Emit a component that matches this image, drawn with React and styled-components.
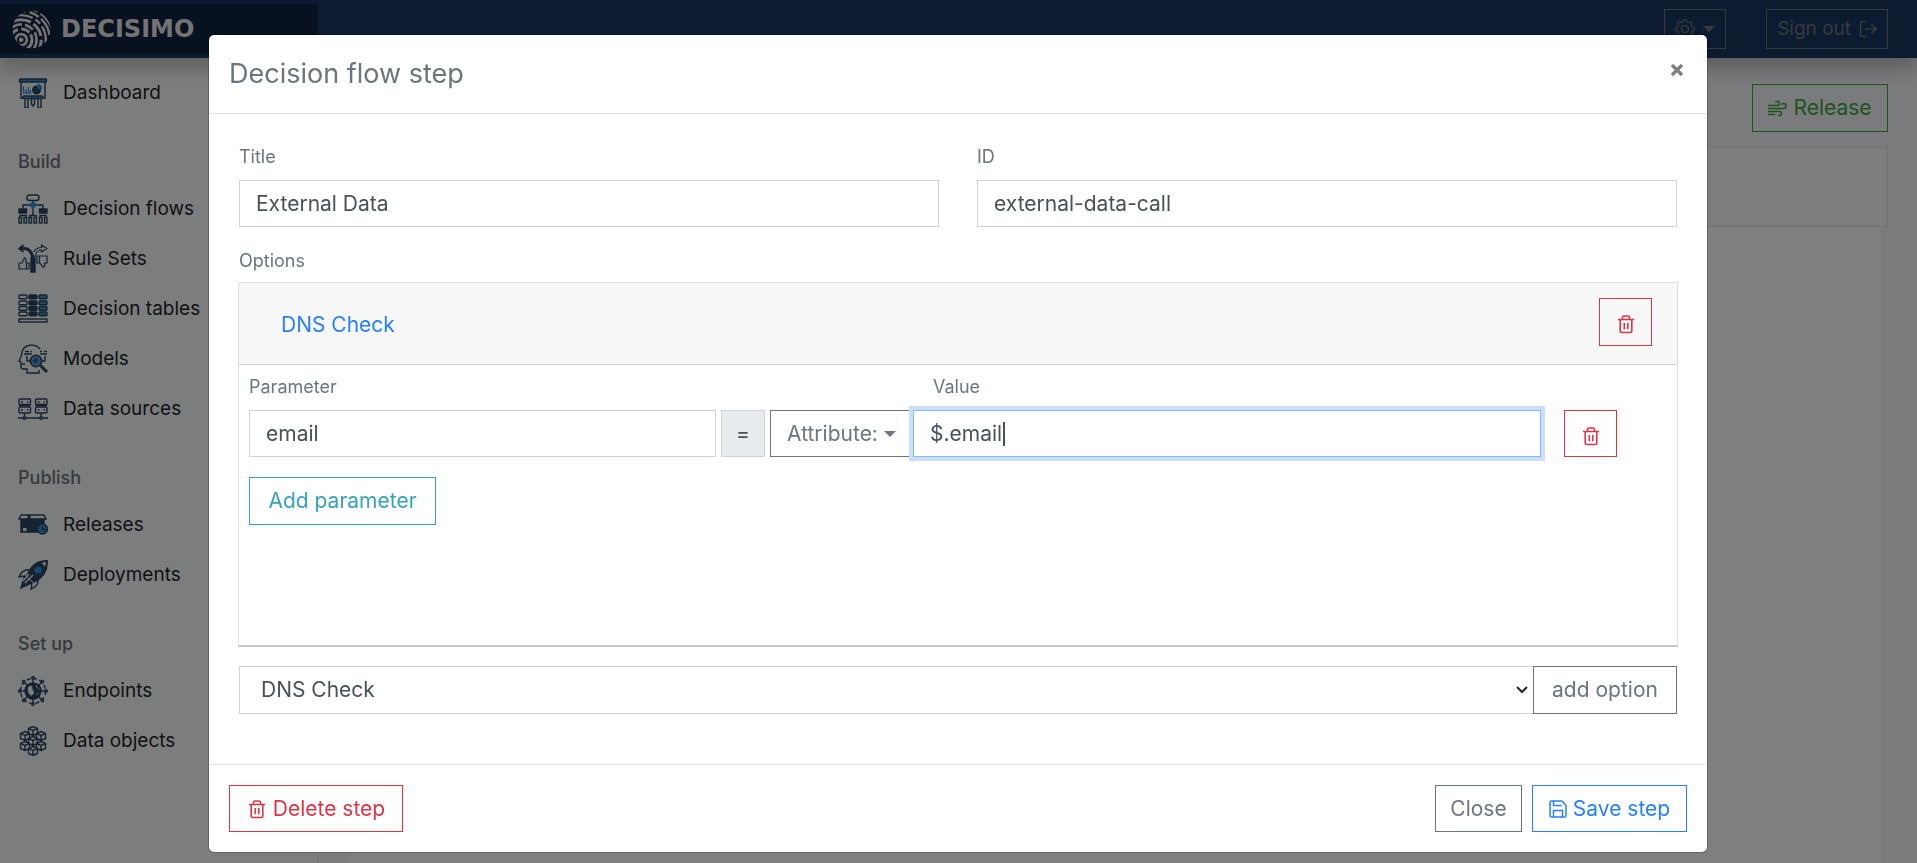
import React, { useState } from "react";
import styled, { createGlobalStyle } from "styled-components";
import { BsGear } from "react-icons/bs";

const GlobalStyle = createGlobalStyle`
  *, *::before, *::after {
    box-sizing: border-box;
  }
  html, body {
    margin: 0;
    height: 100%;
    overflow: hidden;
  }
  body, button, input, select {
    font-family: Inter, "Noto Sans", sans-serif;
    font-size: 21px;
    line-height: 30px;
  }
  body {
    color: #212529;
    background: #f5f6fa;
  }
`;

const NAVY = "#2a4560";
const BLUE = "#3593dd";

const Page = styled.div`
  min-height: 100vh;
  display: flex;
  flex-direction: column;
`;

const Navbar = styled.header`
  position: relative;
  z-index: 1;
  height: 58px;
  display: flex;
  align-items: center;
  justify-content: space-between;
  padding-right: 29px;
  background: #18365e;
  box-shadow: 0 10px 20px rgba(0, 0, 0, 0.25);
`;

const Brand = styled.a`
  width: 318px;
  height: 50px;
  display: flex;
  align-items: center;
  gap: 10px;
  padding-left: 12px;
  background: #0e2240;
  color: #e6e6e8;
  font-family: "DejaVu Sans", sans-serif;
  font-size: 24px;
  font-weight: 700;
  text-decoration: none;
`;

const NavActions = styled.div`
  display: flex;
  gap: 40px;
`;

const NavButton = styled.button`
  height: 40px;
  display: flex;
  align-items: center;
  gap: 8px;
  padding: 0 10px;
  border: 1px solid #6c757d;
  background: transparent;
  color: #6c757d;
  font-size: 19px;
`;

const Columns = styled.div`
  flex: 1;
  display: flex;
`;

const Sidebar = styled.nav`
  width: 318px;
  padding-top: 10px;
  background: #f8fbfa;
  border-right: 1px solid #dee2e6;
`;

const SectionTitle = styled.h2`
  margin: 0;
  padding: 32px 18px 10px;
  color: #6c757d;
  font-size: 18px;
  font-weight: 500;
  line-height: 24px;
`;

const NavLink = styled.a`
  height: 50px;
  display: flex;
  align-items: center;
  gap: 15px;
  padding-left: 18px;
  color: #212529;
  font-size: 19px;
  text-decoration: none;
`;

const Content = styled.main`
  flex: 1;
  display: flex;
  flex-direction: column;
  padding: 26px 29px 0 30px;
`;

const Toolbar = styled.div`
  display: flex;
  justify-content: flex-end;
  margin-bottom: 15px;
`;

const Panel = styled.div`
  height: 80px;
  border: 1px solid #dee2e6;
  background: #f8fbfa;
`;

const Canvas = styled.div`
  flex: 1;
  margin-right: 7px;
  background: #fefefe;
`;

const Backdrop = styled.div`
  position: fixed;
  inset: 0;
  z-index: 2;
  padding: 34px 21px 0 20px;
  background: rgba(0, 0, 0, 0.5);
`;

const Dialog = styled.section`
  max-width: 1500px;
  margin: 0 auto;
  border: 1px solid rgba(0, 0, 0, 0.2);
  border-radius: 6px;
  background: #fff;
  background-clip: padding-box;
`;

const DialogHeader = styled.header`
  display: flex;
  justify-content: space-between;
  align-items: flex-start;
  padding: 20px;
  border-bottom: 1px solid #dee2e6;
`;

const DialogTitle = styled.h1`
  margin: 0;
  color: #6c757d;
  font-size: 27px;
  font-weight: 400;
  line-height: 38px;
`;

const CloseIcon = styled.button`
  width: 20px;
  height: 30px;
  display: flex;
  align-items: center;
  justify-content: center;
  padding: 0;
  border: 0;
  background: transparent;
  color: #7f7f7f;
`;

const DialogBody = styled.div`
  padding: 30px 30px 50px;
`;

const DialogFooter = styled.footer`
  display: flex;
  gap: 10px;
  padding: 20px;
  border-top: 1px solid #dee2e6;
`;

const Spacer = styled.div`
  flex: 1;
`;

const Fields = styled.div`
  display: grid;
  grid-template-columns: 1fr 1fr;
  gap: ${(props) => props.$gap || 0}px;
`;

const Label = styled.label`
  display: block;
  margin-bottom: 10px;
  color: #6c757d;
  font-size: 18px;
  line-height: 26px;
`;

const OptionsLabel = styled(Label)`
  margin: 21px 0 8px;
`;

const Input = styled.input`
  width: 100%;
  min-width: 0;
  height: 47px;
  padding: 0 16px;
  border: 1px solid #ced4da;
  border-radius: 0;
  outline: none;
  background: #fff;
  color: #495057;
  ${(props) =>
    props.$active &&
    `
    border-color: #80bdff;
    box-shadow: 0 0 0 4px #cbdeff;
  `}
`;

const Button = styled.button`
  min-width: ${(props) => props.$width || 0}px;
  height: ${(props) => (props.$compact ? 47 : 48)}px;
  display: flex;
  align-items: center;
  justify-content: center;
  gap: 6px;
  flex: none;
  padding: 0 12px;
  border: 1px solid ${(props) => props.$color};
  background: transparent;
  color: ${(props) => props.$color};
  white-space: nowrap;
`;

const TrashButton = styled(Button)`
  width: 53px;
  padding: 4px 0 0;
`;

const Card = styled.div`
  min-height: 365px;
  margin: 0 -1px 19px;
  border: 1px solid #dfdfdf;
  border-bottom: 2px solid #c8c8c8;
`;

const CardHeader = styled.div`
  display: flex;
  align-items: center;
  justify-content: space-between;
  height: 82px;
  padding: 0 25px 4px 42px;
  border-bottom: 1px solid #d4d4d4;
  background: #f7f7f7;
`;

const CardLink = styled.a`
  padding-top: 6px;
  color: #2680ff;
  text-decoration: none;
`;

const CardBody = styled.div`
  padding: 9px 60px 0 10px;
`;

const ParamRow = styled.div`
  display: flex;
  gap: 5px;
  margin-bottom: 20px;
`;

const ParamName = styled.div`
  flex: 467;
`;

const Equals = styled.span`
  width: 44px;
  height: 47px;
  display: flex;
  align-items: center;
  justify-content: center;
  border: 1px solid #ced4da;
  background: #e9ecef;
  color: #495057;
`;

const ValueGroup = styled.div`
  flex: 771;
  display: flex;
  margin-right: 18px;
`;

const ValueBox = styled.div`
  position: relative;
  flex: 1;
`;

const Caret = styled.span`
  position: absolute;
  top: 12px;
  left: 90px;
  width: 2px;
  height: 24px;
  background: #495057;
`;

const OptionRow = styled.div`
  display: flex;
`;

const SelectBox = styled.div`
  position: relative;
  flex: 1;
`;

const Select = styled.select`
  width: 100%;
  height: 48px;
  padding: 0 21px;
  border: 1px solid #ced4da;
  border-right: 0;
  border-radius: 0;
  appearance: none;
  background: #fff;
  color: #495057;
`;

const SelectArrow = styled.svg`
  position: absolute;
  top: 20px;
  right: 5px;
  pointer-events: none;
`;

const Icon = ({ size = 30, view = 30, width = 1.4, children }) => (
  <svg
    width={size}
    height={size}
    viewBox={`0 0 ${view} ${view}`}
    fill="none"
    stroke="currentColor"
    strokeWidth={width}
    aria-hidden="true"
  >
    {children}
  </svg>
);

const MenuIcon = ({ children }) => (
  <svg
    width="30"
    height="30"
    viewBox="0 0 30 30"
    fill="none"
    stroke={NAVY}
    strokeWidth="1.4"
    aria-hidden="true"
  >
    {children}
  </svg>
);

const rings = [
  [5.5, 2.6, ""],
  [10.5, 3, "16 3 9 2"],
  [15, 2.6, "9 3 22 3"],
  [19.500, 3, "14 4 8 3 20 3"],
  [24, 2.4, "22 3 6 3"],
  [28, 2.4, "10 3 18 4"],
  [31.500, 1.8, "18 3"],
  [34.500, 1.4, "12 3"],
];

const Globe = () => (
  <svg width="39" height="39" viewBox="0 0 38 38" fill="none" stroke="#e6e6e8" aria-hidden="true">
    <clipPath id="ball">
      <circle cx="19" cy="19" r="18.500" />
    </clipPath>
    <g clipPath="url(#ball)">
      {rings.map(([r, width, dash]) => (
        <circle key={r} cx="9" cy="29" r={r} strokeWidth={width} strokeDasharray={dash} />
      ))}
      <circle cx="9" cy="29" r="1.800" fill="#e6e6e8" />
    </g>
  </svg>
);

const Trash = () => (
  <Icon size={20} view={20} width={1.6}>
    <path d="M2 5.5h16M4.2 5.5v11.3q0 1.7 1.7 1.7h8.2q1.7 0 1.7-1.7V5.5M6.5 5V3.4Q6.5 2 8 2h4q1.5 0 1.5 1.4V5M8.3 9v6.3M11.8 9v6.3" />
  </Icon>
);

const Save = () => (
  <Icon size={18} view={18} width={1.5}>
    <path d="M1 2.6Q1 1 2.6 1h10.2L17 5.2v10.2q0 1.6-1.6 1.6H2.6Q1 17 1 15.4zM4.5 17v-6.5h9V17M4.5 1v4.5h8" />
  </Icon>
);

const SignOut = () => (
  <Icon size={18} view={18} width={1.7}>
    <path d="M7 1.500H3Q1.500 1.500 1.500 3v12q0 1.500 1.500 1.500h4M6 9h11M12.500 4.500 17 9l-4.500 4.500" />
  </Icon>
);

const Wind = () => (
  <Icon size={19} view={19} width={1.6}>
    <path d="M0 6.500h9q2.500 0 2.500-2.200T9.300 2.200q-1.500 0-1.800 1.300M0 9.500h15q3 0 3-2.500t-2.400-2.500q-1.800 0-2 1.700M0 12.500h11.500q2 0 2 2t-1.800 2q-1.200 0-1.500-1M0 15.500h7" />
  </Icon>
);

const Triangle = () => (
  <svg width="12" height="6" viewBox="0 0 12 6" fill="currentColor" aria-hidden="true">
    <path d="M0 0h12L6 6z" />
  </svg>
);

const DashboardIcon = () => (
  <MenuIcon>
    <path d="M3 3v17h24V3" />
    <rect x="1.500" y="1" width="27" height="3" rx="1" fill={BLUE} />
    <path d="M5.500 8v7h8M8 14v-3M10.500 14v-5M12.500 14v-2" stroke={BLUE} />
    <circle cx="18.500" cy="12" r="4.500" fill={NAVY} stroke="none" />
    <path d="M19.500 11V5.500a5.500 5.500 0 0 1 5 5.500z" fill={BLUE} stroke="none" />
    <rect x="5" y="18" width="20" height="2.600" rx="1" fill={BLUE} />
    <path d="M7 21v9h3v-9M20 21v9h3v-9M13.500 21v5l1.500 2 1.500-2v-5" />
  </MenuIcon>
);

const FlowsIcon = () => (
  <MenuIcon>
    <rect x="9" y="1" width="12" height="5.500" rx="2.500" />
    <path d="M15 7v15M5 16v-5h20v5M2 24v-2.500h6.500V24M12 24v-2.500h6V24M22 24v-2.500h6V24" />
    <path d="M15 7.500l5 3.500-5 3.500-5-3.500z" fill={BLUE} stroke="none" />
    <rect x="1" y="15" width="7.500" height="4" fill={NAVY} />
    <rect x="21.500" y="15" width="7.500" height="4" fill={NAVY} />
    {[1, 6, 11, 16, 21.500, 26.500].map((x) => (
      <rect key={x} x={x} y="23.500" width="2.500" height="5.500" />
    ))}
  </MenuIcon>
);

const RulesIcon = () => (
  <MenuIcon>
    <path d="M13 14h4v14h-4z" fill={NAVY} />
    <path d="M2 4.500h4c5 0 8 4 9 10" strokeWidth="3" />
    <path d="M5.500 1 1 4.500 5.500 8" strokeWidth="1.800" />
    <path d="M15.500 8c2-3 5-4.500 8-4.500V1L29 4.500 23.500 8V6c-4 0-6 3-6.500 7" strokeWidth="1.200" />
    <path d="M1 19h3l2.500-5 1.500 1v4M1 19v6h10v-6H8M8.500 19v6M29 12H19v7h3l3 4.500 1.500-1V19H29zM21.500 12v7" strokeWidth="1.200" />
  </MenuIcon>
);

const TablesIcon = () => (
  <MenuIcon>
    {[1, 7, 12.500, 18].map((y) => (
      <g key={y}>
        <rect x="1" y={y} width="8" height="3.700" rx="1" />
        <rect x="11" y={y} width="8" height="3.700" rx="1" fill={NAVY} />
        <rect x="21" y={y} width="8" height="3.700" rx="1" fill={BLUE} />
      </g>
    ))}
    <rect x="1" y="25" width="28" height="3" />
  </MenuIcon>
);

const ModelsIcon = () => (
  <MenuIcon>
    <path d="M22 5C17-1 6 0 4 8c0 5-2 7-3 9l2 1v5q0 2 2.500 2H9v4h12v-3M4 20h3M7 7.500h4M12.500 7.500H14M6 10h8M22 7.500h2M26 7.500h3M22 10h7M9 12v5h4M27 12v5h-4" />
    <circle cx="18" cy="17" r="5.500" strokeWidth="2" />
    <circle cx="18" cy="17" r="4" fill={BLUE} stroke="none" />
    <path d="M18 14v3h-3" />
    <path d="M22.500 21.500 29 28" strokeWidth="3" />
  </MenuIcon>
);

const SourcesIcon = () => (
  <MenuIcon>
    {[1, 17.500].map((x) => (
      <g key={x}>
        <rect x={x} y="5" width="11.500" height="5.500" rx="1" />
        <rect x={x} y="13" width="11.500" height="6" rx="1" />
        <path d={`M${x} 11.500h11.500M${x + 2} 8h2M${x + 8} 8h1.500M${x + 2} 16h2M${x + 8} 16h1.500M${x + 5.500} 19v4`} />
        <circle cx={x + 5.500} cy="24" r="1.300" />
      </g>
    ))}
    <path d="M0 24h5M8 24h14M24.500 24H30" />
  </MenuIcon>
);

const ReleasesIcon = () => (
  <MenuIcon>
    <path d="M3 9h23v13H3z" fill={NAVY} />
    <path d="M3 5h23l2 4H1z" fill="#f8fbfa" />
    <path d="M11 5v17" strokeWidth="3" />
    <path d="M5 18h3.500v3H5z" fill="#f8fbfa" stroke="none" />
    <circle cx="24.500" cy="19" r="5" fill={BLUE} />
    <path d="M24.500 16v3.500H28" />
  </MenuIcon>
);

const RocketIcon = () => (
  <MenuIcon>
    <path d="M29 1c1 9-4 17-13 21l-7-7C13 6 20 0 29 1z" fill={NAVY} />
    <path d="M22 2.500 27.500 8 29 1z" fill="#f8fbfa" />
    <path d="M12 10c-6-1-9 2-11 7 3-1 5-1 7 0M20 18c1 6-2 9-7 11 1-3 1-5 0-7" />
    <path d="M7 16l7 7-5 2-6 3 2-7z" fill={NAVY} />
    <path d="M15 15l-8 8M11 14l-6 7" stroke="#f8fbfa" />
    <circle cx="20" cy="10" r="3.600" fill={BLUE} stroke="none" />
  </MenuIcon>
);

const EndpointsIcon = () => (
  <MenuIcon>
    <circle cx="15" cy="15" r="12.500" strokeDasharray="4 2.500" />
    <circle cx="15" cy="15" r="8" fill={NAVY} />
    <path d="M10 12c2-3 4-3 4 0s3 3 1 6-5 0-5-6zM18 9c0 3 3 3 4 5M18 19l3-2" fill="#f8fbfa" stroke="#f8fbfa" strokeWidth=".6" />
    {[0, 45, 90, 135, 180, 225, 270, 315].map((angle) => (
      <g key={angle} transform={`rotate(${angle} 15 15)`}>
        <path d="M15 7V3" />
        <circle cx="15" cy="1.800" r="1.200" />
      </g>
    ))}
  </MenuIcon>
);

const cubes = [
  [15, 5],
  [7, 10],
  [23, 10],
  [15, 15],
  [7, 20],
  [23, 20],
  [15, 25],
];

const ObjectsIcon = () => (
  <MenuIcon>
    {cubes.map(([x, y]) => (
      <path key={`${x}-${y}`} d={`M${x} ${y - 4.500}l4.500 2v5l-4.500 2-4.500-2v-5zM${x - 4.500} ${y - 2.500}l4.500 2 4.500-2M${x} ${y - 0.500}v5`} />
    ))}
  </MenuIcon>
);

const sections = [
  { items: [["Dashboard", DashboardIcon]] },
  {
    title: "Build",
    items: [
      ["Decision flows", FlowsIcon],
      ["Rule Sets", RulesIcon],
      ["Decision tables", TablesIcon],
      ["Models", ModelsIcon],
      ["Data sources", SourcesIcon],
    ],
  },
  {
    title: "Publish",
    items: [
      ["Releases", ReleasesIcon],
      ["Deployments", RocketIcon],
    ],
  },
  {
    title: "Set up",
    items: [
      ["Endpoints", EndpointsIcon],
      ["Data objects", ObjectsIcon],
    ],
  },
];

const Menu = () => (
  <Sidebar>
    {sections.map(({ title, items }) => (
      <div key={items[0][0]}>
        {title && <SectionTitle>{title}</SectionTitle>}
        {items.map(([name, ItemIcon]) => (
          <NavLink href="#" key={name}>
            <ItemIcon />
            {name}
          </NavLink>
        ))}
      </div>
    ))}
  </Sidebar>
);

const OptionCard = () => {
  const [param, setParam] = useState("email");
  const [value, setValue] = useState("$.email");
  return (
    <Card>
      <CardHeader>
        <CardLink href="#">DNS Check</CardLink>
        <TrashButton $color="#dc3545" aria-label="Remove option">
          <Trash />
        </TrashButton>
      </CardHeader>
      <CardBody>
        <Fields>
          <Label htmlFor="param">Parameter</Label>
          <Label htmlFor="value">Value</Label>
        </Fields>
        <ParamRow>
          <ParamName>
            <Input id="param" value={param} onChange={(e) => setParam(e.target.value)} />
          </ParamName>
          <Equals>=</Equals>
          <ValueGroup>
            <Button $color="#6c757d" $width={143} $compact>
              Attribute:
              <Triangle />
            </Button>
            <ValueBox>
              <Input id="value" $active value={value} onChange={(e) => setValue(e.target.value)} />
              <Caret />
            </ValueBox>
          </ValueGroup>
          <TrashButton $color="#dc3545" $compact aria-label="Remove parameter">
            <Trash />
          </TrashButton>
        </ParamRow>
        <Button $color="#35a3b8" $width={187}>
          Add parameter
        </Button>
      </CardBody>
    </Card>
  );
};

const StepDialog = () => (
  <Backdrop>
    <Dialog role="dialog" aria-labelledby="step-title">
      <DialogHeader>
        <DialogTitle id="step-title">Decision flow step</DialogTitle>
        <CloseIcon aria-label="Close">
          <Icon size={12} view={12} width={3.4}>
            <path d="M1 1l10 10M11 1L1 11" />
          </Icon>
        </CloseIcon>
      </DialogHeader>
      <DialogBody>
        <Fields $gap={38}>
          <div>
            <Label htmlFor="title">Title</Label>
            <Input id="title" defaultValue="External Data" />
          </div>
          <div>
            <Label htmlFor="step-id">ID</Label>
            <Input id="step-id" defaultValue="external-data-call" />
          </div>
        </Fields>
        <OptionsLabel htmlFor="option">Options</OptionsLabel>
        <OptionCard />
        <OptionRow>
          <SelectBox>
            <Select id="option" defaultValue="dns">
              <option value="dns">DNS Check</option>
            </Select>
            <SelectArrow width="12" height="8" viewBox="0 0 12 8" fill="none" stroke="#212529" strokeWidth="2">
              <path d="M1 1l5 5 5-5" />
            </SelectArrow>
          </SelectBox>
          <Button $color="#6c757d" $width={144}>
            add option
          </Button>
        </OptionRow>
      </DialogBody>
      <DialogFooter>
        <Button $color="#dc3545" $width={174} $compact>
          <Trash />
          Delete step
        </Button>
        <Spacer />
        <Button $color="#6c757d" $width={87} $compact>
          Close
        </Button>
        <Button $color="#2680ff" $width={155} $compact>
          <Save />
          Save step
        </Button>
      </DialogFooter>
    </Dialog>
  </Backdrop>
);

export default () => (
  <>
    <GlobalStyle />
    <Page>
      <Navbar>
        <Brand href="#">
          <Globe />
          DECISIMO
        </Brand>
        <NavActions>
          <NavButton aria-label="Settings">
            <BsGear size={20} />
            <Triangle />
          </NavButton>
          <NavButton>
            Sign out
            <SignOut />
          </NavButton>
        </NavActions>
      </Navbar>
      <Columns>
        <Menu />
        <Content>
          <Toolbar>
            <Button $color="#3fa63f" $width={136}>
              <Wind />
              Release
            </Button>
          </Toolbar>
          <Panel />
          <Canvas />
        </Content>
      </Columns>
    </Page>
    <StepDialog />
  </>
);
